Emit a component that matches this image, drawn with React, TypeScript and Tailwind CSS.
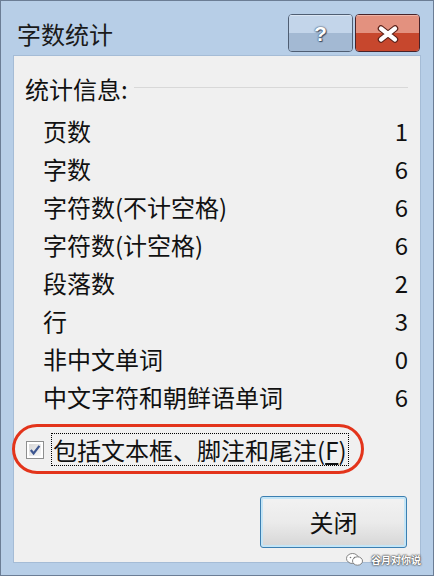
import React from 'react';

const FONT = { fontFamily: '"Noto Sans CJK SC", "Noto Sans", "Liberation Sans", sans-serif' };

const rows: [string, string][] = [
  ['页数', '1'],
  ['字数', '6'],
  ['字符数(不计空格)', '6'],
  ['字符数(计空格)', '6'],
  ['段落数', '2'],
  ['行', '3'],
  ['非中文单词', '0'],
  ['中文字符和朝鲜语单词', '6'],
];

function HelpButton() {
  return (
    <div className="w-[65px] h-[38px] rounded-[4px] border border-[#4f5e73] overflow-hidden flex flex-col relative">
      <div className="h-[18px] bg-[#c3d5ea] border-t border-[#dbe6f3]" />
      <div className="flex-1 bg-[#a3b9d3]" />
      <div className="absolute inset-0 flex items-center justify-center pt-[1px]">
        <span
          className="text-white font-bold text-[21px] leading-none"
          style={{ fontFamily: '"Liberation Sans", sans-serif', textShadow: '0 0 1px #3a4d66, 0 0 2px #3a4d66, 1px 1px 1px #3a4d66' }}
        >
          ?
        </span>
      </div>
    </div>
  );
}

function CloseButton() {
  return (
    <div className="w-[65px] h-[38px] rounded-[4px] border border-[#47232a] overflow-hidden flex flex-col relative">
      <div className="h-[18px] bg-[#e3917f] border-t border-[#eeb3a5]" />
      <div className="flex-1 bg-[#c7472d]" />
      <div className="absolute inset-0 flex items-center justify-center pt-[1px]">
        <svg width="24" height="18" viewBox="0 0 24 18">
          <path d="M5 3.5 L19 14.5 M19 3.5 L5 14.5" stroke="#5a2018" strokeWidth="6.5" strokeLinecap="round" />
          <path d="M5 3.5 L19 14.5 M19 3.5 L5 14.5" stroke="#ffffff" strokeWidth="4.2" strokeLinecap="round" />
        </svg>
      </div>
    </div>
  );
}

function Checkbox() {
  return (
    <div className="w-[18px] h-[18px] border border-[#8e8f8f] bg-white p-[2px] shrink-0">
      <div className="w-full h-full bg-gradient-to-br from-[#d8d8d8] to-[#f7f7f7] flex items-center justify-center">
        <svg width="12" height="12" viewBox="0 0 12 12">
          <path d="M1.8 6 L4.6 9.4 L10.4 1.8" fill="none" stroke="#3d5690" strokeWidth="2.2" />
        </svg>
      </div>
    </div>
  );
}

export default function App() {
  return (
    <div className="w-[434px] h-[576px] relative bg-[#b7cee7] border border-[#6b7d95] flex flex-col text-[#111]" style={FONT}>
      {/* title bar */}
      <div className="h-[54px] flex items-start shrink-0">
        <div className="pl-[16px] pt-[17px] text-[24px] leading-[32px] text-[#1a1a1a]">字数统计</div>
        <div className="ml-auto mt-[13px] mr-[13px] flex gap-[2px]">
          <HelpButton />
          <CloseButton />
        </div>
      </div>

      {/* client area */}
      <div className="flex-1 mx-[12px] mb-[12px] bg-[#f0f0f0] border border-[#a5bcd6] relative text-[24px]">
        <div className="flex items-center mt-[14px] h-[38px] pl-[11px] pr-[12px]">
          <span className="leading-[32px]">统计信息:</span>
          <div className="flex-1 ml-[6px] mt-[-4px] h-px bg-[#d8d8d8]" />
        </div>

        <div className="mt-[4px] pl-[29px] pr-[12px]">
          {rows.map(([label, value]) => (
            <div key={label} className="h-[38px] flex items-center justify-between">
              <span className="leading-[32px]">{label}</span>
              <span className="leading-[32px]">{value}</span>
            </div>
          ))}
        </div>

        <div className="flex items-center mt-[17px] pl-[12px] h-[33px]">
          <Checkbox />
          <div className="ml-[7px] border border-dotted border-black h-[33px] flex items-center px-[1px]">
            <span className="leading-[30px]">
              包括文本框、脚注和尾注(<span className="underline underline-offset-[3px]">F</span>)
            </span>
          </div>
        </div>

        <div className="flex justify-end pr-[13px] mt-[30px]">
          <div className="w-[147px] h-[52px] rounded-[3px] border border-[#3c7fb1] bg-gradient-to-b from-[#f2f2f2] via-[#ebebeb] to-[#d6d6d6] shadow-[inset_0_0_0_2px_#c4e5f6] flex items-center justify-center">
            <span className="leading-[32px]">关闭</span>
          </div>
        </div>

        {/* red annotation ring */}
        <div className="absolute left-[-2px] top-[368px] w-[352px] h-[50px] rounded-[25px] border-[3px] border-[#e3341b] pointer-events-none" />
      </div>

      {/* watermark */}
      <div
        className="absolute right-[12px] bottom-[9px] flex items-center gap-[8px] text-white text-[10px] leading-none font-bold"
        style={{ textShadow: '0 0 1px #555, 0 0 2px #555, 0 0 2px #555' }}
      >
        <svg width="17" height="13" viewBox="0 0 17 13">
          <ellipse cx="6.5" cy="5.5" rx="6" ry="5" fill="#ffffff" stroke="#777" strokeWidth="0.9" />
          <ellipse cx="11.5" cy="8" rx="5" ry="4.2" fill="#ffffff" stroke="#777" strokeWidth="0.9" />
          <circle cx="4.5" cy="4.5" r="0.8" fill="#777" />
          <circle cx="8.5" cy="4.5" r="0.8" fill="#777" />
        </svg>
        <span>谷月对你说</span>
      </div>
    </div>
  );
}
